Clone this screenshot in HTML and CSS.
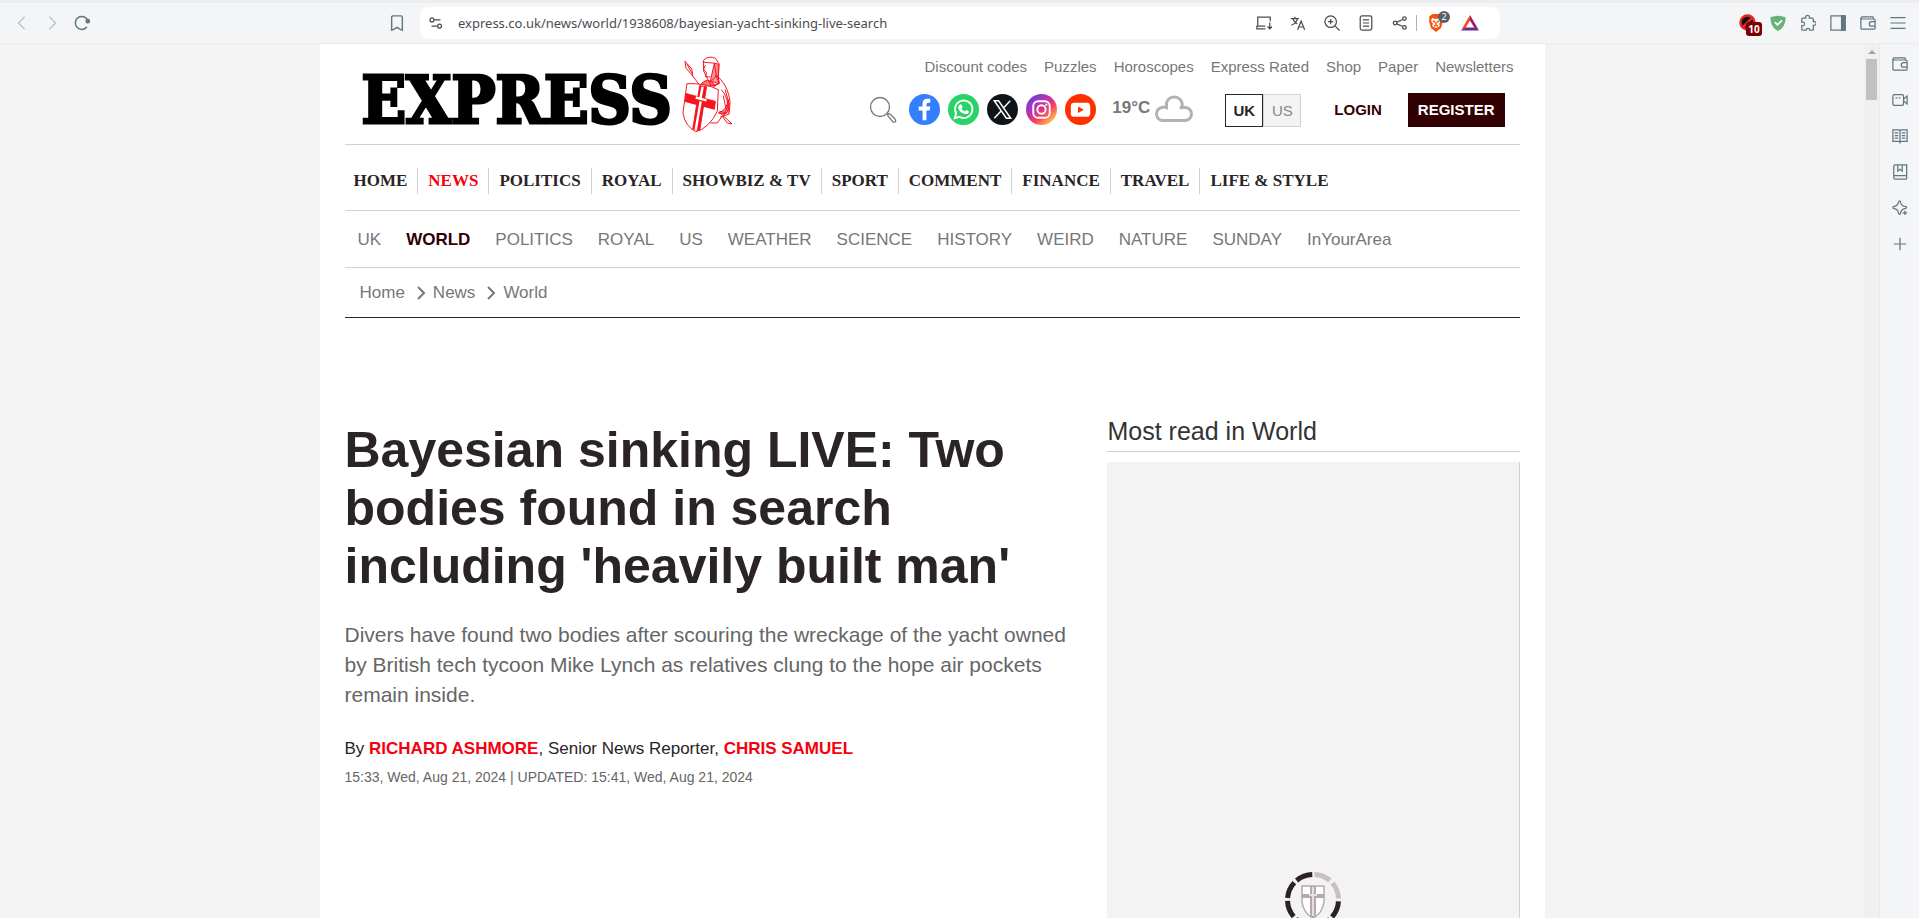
FILE: index.html
```html
<!DOCTYPE html>
<html lang="en">
<head>
<meta charset="utf-8">
<title>Bayesian sinking LIVE: Two bodies found in search</title>
<link rel="stylesheet" href="styles.css">
</head>
<body>
<svg class="defs" aria-hidden="true">
  <symbol id="wallet" viewBox="0 0 18 18"><path d="M1 3.500V14.500a1.500 1.500 0 0 0 1.500 1.500H15.500a1.500 1.500 0 0 0 1.500-1.500V6A1.500 1.500 0 0 0 15.500 4.500H2.500A1.200 1.200 0 0 1 2.500 2H14.500l1 2.500M17 7.500h-4a2.500 2.500 0 0 0 0 5h4"/></symbol>
</svg>
<header class="toolbar">
  <div class="nav-tools">
    <button class="tool dim" aria-label="Back"><svg viewBox="0 0 18 18"><path d="M12 2 5 9l7 7"/></svg></button>
    <button class="tool dim" aria-label="Forward"><svg viewBox="0 0 18 18"><path d="m6 2 7 7-7 7"/></svg></button>
    <button class="tool" aria-label="Reload"><svg viewBox="0 0 18 18"><path d="M14.500 13.500A7.300 7.300 0 1 1 15.500 6" stroke-width="1.700"/><circle cx="15.500" cy="7" r="2" fill="currentColor"/></svg></button>
  </div>
  <button class="tool bookmark" aria-label="Bookmark"><svg viewBox="0 0 18 18"><path d="M3 2.500A1.500 1.500 0 0 1 4.500 1h9A1.500 1.500 0 0 1 15 2.500V17l-2-.5L9 14l-4 2.500-2 .5z" stroke-width="1.600"/></svg></button>
  <div class="address">
    <button class="tool dark" aria-label="Site settings"><svg viewBox="0 0 18 18"><path d="M7 5.500h7M4 12.500h6" stroke-width="1.600"/><circle cx="4.500" cy="5.500" r="2.200"/><circle cx="13" cy="12.500" r="2.200"/></svg></button>
    <input class="url" aria-label="Address" value="express.co.uk/news/world/1938608/bayesian-yacht-sinking-live-search">
    <div class="tools">
      <button class="tool dark" aria-label="Install"><svg viewBox="0 0 18 18"><path d="M10.500 15.500H1V12.500h9.500M2 12.500v-10h14V7M15.500 8.500v7M13 13l2.500 2.500L18 13"/></svg></button>
      <button class="tool dark" aria-label="Translate"><svg viewBox="0 0 18 18"><path d="M1 4h9M5.500 2v2M8.500 4c-1 3.500-3.500 6-7 7.500M3 4c1 3 3 5 5 6M8.500 16.500 12.500 7l4 9.500M10 13.500h5"/></svg></button>
      <button class="tool dark" aria-label="Zoom"><svg viewBox="0 0 18 18"><circle cx="7.500" cy="7.500" r="6.500"/><path d="m12.500 12.500 5 5M7.500 4.500v6M4.500 7.500h6"/></svg></button>
      <button class="tool dark" aria-label="Reader"><svg viewBox="0 0 18 18"><rect x="2.500" y="1" width="13" height="16" rx="2"/><path d="M5.500 5.500h7M5.500 9h7M5.500 12.500h7"/></svg></button>
      <button class="tool dark" aria-label="Share"><svg viewBox="0 0 18 18"><circle cx="3.500" cy="9" r="2"/><circle cx="14" cy="4" r="2"/><circle cx="14" cy="14" r="2"/><path d="m5.500 8 6.500-3M5.500 10l6.500 3"/></svg></button>
    </div>
    <span class="divider"></span>
    <button class="tool brave" aria-label="Brave Shields"><svg viewBox="0 0 18 18"><path d="m4 1 2-1h6l2 1 2 2-.5 2 .5 2-2 7-5 4-5-4-2-7 .5-2L2 3z" fill="#fb4f0a" stroke="none"/><path d="m5 4 4 1 4-1 1 3-2 3 1 2-4 2-4-2 1-2-2-3z" fill="#fff" stroke="none"/><path d="m6 7 2 1M12 7l-2 1M9 8v3M7 12l2-1 2 1" stroke="#fb4f0a"/></svg><span class="count">2</span></button>
    <button class="tool rewards" aria-label="Rewards"><svg viewBox="0 0 18 18" stroke="none"><path d="M9 1 0 16.500l4.500-2.500L9 6.500z" fill="#ff4724"/><path d="m9 1 9 15.500-4.500-2.500L9 6.500z" fill="#9e1f63"/><path d="M0 16.500h18L13.500 13.500h-9z" fill="#662d91"/></svg></button>
  </div>
  <div class="extensions">
    <button class="tool blocker" aria-label="Blocker"><svg viewBox="0 0 18 18"><circle cx="8.500" cy="8.500" r="7" fill="#111" stroke="#e3262e" stroke-width="2.500"/><path d="m3.500 13.500 10-10" stroke="#e3262e" stroke-width="2.500"/></svg><span class="badge">10</span></button>
    <button class="tool" aria-label="AdGuard"><svg viewBox="0 0 18 18"><path d="M.5 2.500Q9-1 17.500 2.500C17.500 9 15.500 14.500 9 18 2.500 14.500.5 9 .5 2.500z" fill="#67b279" stroke="none"/><path d="m5.500 8 3 3 5-5" stroke="#fff" stroke-width="2"/></svg></button>
    <button class="tool" aria-label="Extensions"><svg viewBox="0 0 18 18"><path d="M3 3.500h3.500a2.200 2.200 0 1 1 4 0H14a1 1 0 0 1 1 1v3a2.200 2.200 0 1 1 0 4V16a1 1 0 0 1-1 1h-3a2 2 0 1 0-4 0H3a1 1 0 0 1-1-1v-4a2.200 2.200 0 1 0 0-4V4.500a1 1 0 0 1 1-1z"/></svg></button>
    <button class="tool" aria-label="Side panel"><svg viewBox="0 0 18 18"><rect x="1" y="1" width="16" height="16"/><path d="M13 1h4v16h-4z" fill="currentColor"/></svg></button>
    <button class="tool" aria-label="Wallet"><svg><use href="#wallet"/></svg></button>
    <button class="tool" aria-label="Menu"><svg viewBox="0 0 18 18"><path d="M.5 3h17M.5 9h17M.5 15h17"/></svg></button>
  </div>
</header>
<div class="window">
  <div class="viewport">
    <div class="page">
      <div class="masthead">
        <a class="logo" href="#"><span>EXPRESS</span>
          <svg viewBox="0 0 52 80" fill="none" stroke="#f5141e" stroke-width="1"><path d="m3 5 7 8 1 7-7-8zM10 19l10 13M34 19c8 5 14 16 15 28l-1 12-9 3M34 19l4 8-8 6-9-5M5 8l5 9"/><path d="M22 15V4q5-5 12-2l4 6-1 13 1 7-8 2-4-7zM21 6l12 1 2 13-5 5M24 9l-2 4 3 4-1 4h5"/><path d="m33 7 4 1v20l-8-3z" fill="#f5141e" fill-opacity=".45"/><path d="M18 30q8-11 16 0z" fill="#f5141e" fill-opacity=".6"/><path d="M5 28q18-1 32 6l-1 22Q28 73 14 77 3 71 1 58z" fill="#fff"/><path d="m4 38 30 8-1 8-30-8z" fill="#f5141e"/><path d="m18 30 7 1-7 45-7-2z" fill="#f5141e"/><path d="m21 31-2 11M19 46l-5 29M14 42l11 3" stroke="#fff" stroke-width="2.500"/><path d="m39 58 12 11-5-1-5-7-5 7h-7M40 34q8 8 7 24M44 34l4 14-6 13M42 40l3 14M38 56l8 2"/><path d="M47 44q3 10-3 15l-7-1q9-3 10-14z" fill="#f5141e" fill-opacity=".5"/></svg></a>
        <div class="head-right">
          <nav class="top-links" aria-label="Services"><a href="#">Discount codes</a><a href="#">Puzzles</a><a href="#">Horoscopes</a><a href="#">Express Rated</a><a href="#">Shop</a><a href="#">Paper</a><a href="#">Newsletters</a></nav>
          <div class="head-tools">
            <button class="search" aria-label="Search"><svg viewBox="0 0 28 28" fill="none" stroke="#777" stroke-width="1.300"><circle cx="11" cy="11" r="9.500"/><path d="m18 17.500 1.500 1.500M19 20q-1-3 2-2l5 5q2 4-2 3z"/></svg></button>
            <div class="social">
              <a href="#" aria-label="Facebook"><svg viewBox="0 0 32 32"><circle cx="16" cy="16" r="16" fill="#337fff"/><path d="M14 27V17h-4v-4h4v-3q0-5 5-5h3v4h-2q-2 0-2 2v2h4l-.7 4H18v10z" fill="#fff"/></svg></a>
              <a href="#" aria-label="WhatsApp"><svg viewBox="0 0 32 32"><circle cx="16" cy="16" r="16" fill="#27d366"/><path d="m7 25 1.300-5a9 9 0 1 1 3.600 3.600z" fill="none" stroke="#fff" stroke-width="2"/><path d="M12 11q1-1 2 0l1 2.500-1 1.500q1 2 3.500 3l1.500-1.500 2.500 1.200q0 3-3 3-6-.7-8-6-.5-2 1.500-3.700z" fill="#fff"/></svg></a>
              <a href="#" aria-label="X"><svg viewBox="0 0 32 32"><circle cx="16" cy="16" r="16" fill="#0f1419"/><path d="M7.500 7h4.500l12.500 18H20zM24 7l-7.500 8M14.500 17.500 7.500 25" fill="none" stroke="#fff" stroke-width="1.500"/></svg></a>
              <a href="#" aria-label="Instagram"><svg viewBox="0 0 32 32"><defs><linearGradient id="insta" x1=".1" y1=".15" x2=".8" y2=".95"><stop stop-color="#7638df"/><stop offset=".4" stop-color="#c632a5"/><stop offset=".65" stop-color="#f5415f"/><stop offset="1" stop-color="#ffc94a"/></linearGradient></defs><circle cx="16" cy="16" r="16" fill="url(#insta)"/><g fill="none" stroke="#fff" stroke-width="2"><rect x="7.500" y="7.500" width="17" height="17" rx="5"/><circle cx="16" cy="16" r="4.300"/></g><circle cx="21" cy="11" r="1.200" fill="#fff"/></svg></a>
              <a href="#" aria-label="YouTube"><svg viewBox="0 0 32 32"><circle cx="16" cy="16" r="16" fill="#ff3000"/><rect x="6" y="9" width="20" height="14.500" rx="3.500" fill="#fff"/><path d="m13.500 13 6 3.200-6 3.300z" fill="#ff3000"/></svg></a>
            </div>
            <a class="weather" href="#">19°C <svg viewBox="0 0 38 28" fill="none" stroke="#b5b1b2" stroke-width="3"><path d="M8 26.500h22a6.500 6.500 0 0 0 0-13q-3-.5-5 1 3-2 2-5.500A8 8 0 0 0 11.500 9v4.500Q9 12.500 6.500 13.500A6.600 6.600 0 0 0 8 26.500z"/></svg></a>
            <div class="edition"><a class="on" href="#">UK</a><a href="#">US</a></div>
            <a class="login" href="#">LOGIN</a>
            <a class="register" href="#">REGISTER</a>
          </div>
        </div>
      </div>
      <nav class="main-nav" aria-label="Sections"><a href="#">HOME</a><a class="on" href="#">NEWS</a><a href="#">POLITICS</a><a href="#">ROYAL</a><a href="#">SHOWBIZ &amp; TV</a><a href="#">SPORT</a><a href="#">COMMENT</a><a href="#">FINANCE</a><a href="#">TRAVEL</a><a href="#">LIFE &amp; STYLE</a></nav>
      <nav class="sub-nav" aria-label="News"><a href="#">UK</a><a class="on" href="#">WORLD</a><a href="#">POLITICS</a><a href="#">ROYAL</a><a href="#">US</a><a href="#">WEATHER</a><a href="#">SCIENCE</a><a href="#">HISTORY</a><a href="#">WEIRD</a><a href="#">NATURE</a><a href="#">SUNDAY</a><a href="#">InYourArea</a></nav>
      <nav class="crumbs" aria-label="Breadcrumb"><a href="#">Home</a><svg viewBox="0 0 10 14"><path d="m2 1 6 6-6 6"/></svg><a href="#">News</a><svg viewBox="0 0 10 14"><path d="m2 1 6 6-6 6"/></svg><a href="#">World</a></nav>
      <div class="columns">
        <main class="article">
          <h1>Bayesian sinking LIVE: Two bodies found in search including 'heavily built man'</h1>
          <p class="lead">Divers have found two bodies after scouring the wreckage of the yacht owned by British tech tycoon Mike Lynch as relatives clung to the hope air pockets remain inside.</p>
          <p class="byline">By <a href="#">RICHARD ASHMORE</a>, Senior News Reporter, <a href="#">CHRIS SAMUEL</a></p>
          <p class="dates">15:33, Wed, Aug 21, 2024 | UPDATED: 15:41, Wed, Aug 21, 2024</p>
        </main>
        <aside class="most-read">
          <h2>Most read in World</h2>
          <div class="loading">
            <svg viewBox="0 0 60 60" fill="none"><g stroke="#2b2226" stroke-width="5"><circle cx="30" cy="30" r="25.500" stroke-dasharray="17 3.030" stroke-dashoffset="-1.500"/></g><path d="M30 4.500a25.500 25.500 0 0 1 25.500 25.500" stroke="#f3f3f3" stroke-width="7"/><path d="M31.500 4.500a25.500 25.500 0 0 1 15.500 6M49.500 13a25.500 25.500 0 0 1 6 15.500" stroke="#c9c1c1" stroke-width="5"/><path d="M19 16h22v16q-2 12-11 16-9-4-11-16z" fill="#fff" stroke="#b5a9ad" stroke-width="1.500"/><path d="M19 26h22" stroke="#b5a9ad" stroke-width="4"/><path d="M30 16v31" stroke="#b5a9ad" stroke-width="6"/><path d="M30 17v29M26 25h8" stroke="#e5dfe0" stroke-width="2"/></svg>
          </div>
        </aside>
      </div>
    </div>
  </div>
  <div class="scrollbar"><span class="arrow"></span><span class="thumb"></span></div>
  <div class="sidebar">
    <button class="tool" aria-label="Wallet"><svg><use href="#wallet"/></svg></button>
    <button class="tool" aria-label="Talk"><svg viewBox="0 0 18 18"><rect x="1" y="3" width="12" height="12" rx="1.500"/><path d="m13 8 4-3.500v9L13 10M4 6.500h2M7.500 6.500h2"/></svg></button>
    <button class="tool" aria-label="Reading list"><svg viewBox="0 0 18 18"><path d="M1 2h7l1 1 1-1h7v13h-7l-1 1-1-1H1zM9 3v14.500M3 5.500h4M3 8.500h4M3 11.500h4M11 5.500h4M11 8.500h4M11 11.500h4"/></svg></button>
    <button class="tool" aria-label="Bookmarks"><svg viewBox="0 0 18 18"><path d="M16.500 13V1H3.500A1.500 1.500 0 0 0 2 2.500v13A1.500 1.500 0 0 0 3.500 17h13M2 13h14.500v4M6.500 1v7L9 6l2.500 2V1"/></svg></button>
    <button class="tool" aria-label="Leo AI"><svg viewBox="0 0 18 18"><path d="M8.500 1q1 0 1.200 1.500.5 4 4.800 4.800 2 .3 2 1.200t-2 1.200q-4 .6-4.800 4.800-.3 1.700-1.200 1.700t-1.200-1.700Q6.500 10.300 2.500 9.700 1 9.500 1 8.500t1.500-1.200q4-.8 4.800-4.800Q7.500 1 8.500 1zM14.500 12v5M12 14.500h5"/></svg></button>
    <button class="tool" aria-label="Add"><svg viewBox="0 0 18 18"><path d="M9 2v14M2 9h14"/></svg></button>
  </div>
</div>
</body>
</html>
```
FILE: styles.css
```css
* { box-sizing: border-box; }
body {
  margin: 0;
  height: 100vh;
  display: flex;
  flex-direction: column;
  overflow: hidden;
  font-family: "Liberation Sans", Arial, sans-serif;
  color: #2a2426;
  background: #f3f3f3;
}
a { color: inherit; text-decoration: none; }
button { padding: 0; border: 0; background: none; }
.defs { position: absolute; width: 0; height: 0; }

/* Browser toolbar */
.toolbar {
  flex: none;
  display: flex;
  align-items: center;
  height: 44px;
  padding: 0 11px 0 12px;
  border-top: 3px solid #ecedef;
  border-bottom: 1px solid #ececee;
  background: #f3f5f7;
}
.tool {
  position: relative;
  flex: none;
  display: grid;
  place-items: center;
  width: 20px;
  height: 20px;
  color: #627680;
}
.tool svg {
  width: 16px;
  height: 16px;
  fill: none;
  stroke: currentColor;
  stroke-width: 1.4;
}
.tool svg[stroke="none"] { stroke: none; }
.dim { color: #b7c2c9; }
.dark { color: #4b4c52; }
.nav-tools, .extensions { display: flex; gap: 10px; }
.bookmark { margin-left: auto; margin-right: 13px; }
.address {
  flex: 0 1 1080px;
  display: flex;
  align-items: center;
  height: 32px;
  padding: 0 20px 0 6px;
  border-radius: 9px;
  background: #fff;
}
.url {
  flex: 1;
  min-width: 0;
  margin-left: 12px;
  padding: 0;
  border: 0;
  outline: 0;
  background: none;
  font: 13px "Noto Sans", sans-serif;
  color: #4b4c52;
}
.tools { display: flex; gap: 14px; }
.divider { width: 1px; height: 16px; margin: 0 9px 0 6px; background: #b0b1b8; }
.brave { margin-right: 14px; }
.brave svg, .blocker svg, .rewards svg { width: 18px; height: 18px; }
.count {
  position: absolute;
  left: 12px;
  top: -2px;
  width: 12px;
  border-radius: 6px;
  background: #5b5f6d;
  color: #fff;
  font: 9px/12px "Noto Sans", sans-serif;
}
.badge {
  position: absolute;
  left: 8px;
  top: 9px;
  width: 16px;
  border-radius: 3px;
  background: #7c0000;
  color: #fff;
  font: bold 10px/14px "Noto Sans", sans-serif;
}
.extensions { margin-left: 238px; }

/* Window body */
.window { flex: 1; min-height: 0; display: flex; }
.viewport { flex: 1; overflow: hidden; }
.scrollbar {
  width: 15px;
  display: flex;
  flex-direction: column;
  align-items: center;
  background: #f0f0f0;
}
.arrow {
  margin: 6px 0 5px;
  border: 4px solid transparent;
  border-top: 0;
  border-bottom-color: #a3a3a3;
}
.thumb { width: 11px; height: 41px; background: #c1c1c1; }
.sidebar {
  width: 40px;
  display: flex;
  flex-direction: column;
  align-items: center;
  gap: 16px;
  padding-top: 10px;
  border-left: 1px solid #e8e9eb;
  background: #f3f5f7;
}

/* Page */
.page {
  max-width: 1225px;
  min-height: 100%;
  margin: 0 auto;
  padding: 0 25px;
  background: #fff;
}
.masthead {
  display: flex;
  justify-content: space-between;
  height: 101px;
  border-bottom: 1px solid #d2d2d2;
}
.logo { display: flex; align-items: flex-start; gap: 10px; padding: 12px 0 0 17px; }
.logo span {
  padding-top: 5px;
  color: #000;
  font: bold 65px/78px "DejaVu Serif Condensed", "DejaVu Serif", serif;
  -webkit-text-stroke: 3px #000;
}
.logo svg { width: 51px; height: 79px; }
.head-right { display: flex; flex-direction: column; align-items: flex-end; }
.top-links {
  display: flex;
  gap: 17px;
  padding: 13px 6px 0 0;
  font-size: 15px;
  line-height: 20px;
  color: #777;
}
.head-tools { display: flex; align-items: center; height: 34px; margin: 16px 15px 0 0; }
.search { margin-right: 12px; }
.search svg { display: block; width: 28px; height: 28px; }
.social { display: flex; gap: 8px; padding-bottom: 2px; }
.social svg { display: block; width: 31px; height: 31px; }
.weather {
  display: flex;
  align-items: center;
  gap: 5px;
  margin: 0 32px 0 16px;
  padding-bottom: 4px;
  font-size: 17px;
  font-weight: bold;
  color: #777;
}
.weather svg { width: 38px; height: 28px; }
.edition { display: flex; font-size: 15px; line-height: 31px; }
.edition a {
  width: 38px;
  border: 1px solid #d2d2d2;
  background: #f3f3f3;
  color: #888;
  text-align: center;
}
.edition .on { border-color: #2a2426; background: #fff; color: #2a2426; font-weight: bold; }
.login, .register { font-size: 15px; font-weight: bold; line-height: 34px; color: #300003; }
.login { margin: 0 26px 0 33px; }
.register { padding: 0 10px; background: #300003; color: #fff; }

.main-nav {
  display: flex;
  align-items: center;
  height: 66px;
  padding-top: 6px;
  border-bottom: 1px solid #d2d2d2;
  font: bold 17px/26px "Liberation Serif", "Times New Roman", serif;
}
.main-nav a { padding: 0 10px; border-left: 1px solid #d2d2d2; }
.main-nav a:first-child { padding-left: 9px; border-left: 0; }
.main-nav .on { color: #f5000c; }
.sub-nav {
  display: flex;
  align-items: center;
  gap: 25px;
  height: 57px;
  padding: 1px 0 0 13px;
  border-bottom: 1px solid #d2d2d2;
  font-size: 17px;
  color: #777;
}
.sub-nav .on { color: #300003; font-weight: bold; }
.crumbs {
  display: flex;
  align-items: center;
  height: 50px;
  padding: 1px 0 0 15px;
  border-bottom: 1px solid #2a2426;
  font-size: 17px;
  color: #777;
}
.crumbs svg { width: 10px; height: 14px; margin: 0 7px 0 11px; fill: none; stroke: #777; stroke-width: 2; }

.columns { display: grid; grid-template-columns: 735fr 413fr; gap: 27px; padding-top: 99px; }
h1 { margin: 4px 0 25px; font-size: 50px; line-height: 58px; }
.lead { margin: 0 0 25px; font-size: 21px; line-height: 30px; color: #666; }
.byline { margin: 0; font-size: 17px; line-height: 28px; }
.byline a { color: #f5000c; font-weight: bold; }
.dates { margin: 0; font-size: 14px; line-height: 28px; color: #666; }
h2 {
  margin: 0 0 10px;
  padding: 0 0 5px 1px;
  border-bottom: 1px solid #d2d2d2;
  font-size: 25px;
  font-weight: normal;
  line-height: 29px;
  color: #333;
}
.loading {
  display: grid;
  place-items: center;
  height: 875px;
  border-right: 1px solid #d2d2d2;
  background: #f3f3f3;
}
.loading svg { width: 60px; height: 60px; }
```
